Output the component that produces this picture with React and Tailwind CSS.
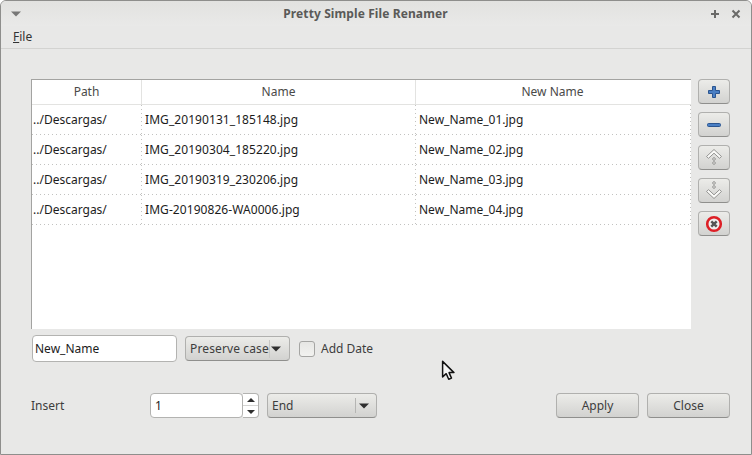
const rows = [
  ["../Descargas/", "IMG_20190131_185148.jpg", "New_Name_01.jpg"],
  ["../Descargas/", "IMG_20190304_185220.jpg", "New_Name_02.jpg"],
  ["../Descargas/", "IMG_20190319_230206.jpg", "New_Name_03.jpg"],
  ["../Descargas/", "IMG-20190826-WA0006.jpg", "New_Name_04.jpg"],
];

const btn =
  "rounded-[4px] border border-[#b0b0ae] border-b-[#8f8f8d] bg-gradient-to-b from-[#ecece9] to-[#d2d2d0] text-[#3d3d3d]";

const Caret = ({ className = "", w = 10 }) => (
  <svg width={w} height="6" viewBox="0 0 10 6" className={className}>
    <path d="M0 0.5h10L5 5.5z" fill="#2f2f2f" />
  </svg>
);

const SideButton = ({ children, mb = "mb-[8px]" }) => (
  <div className={`${btn} ${mb} flex h-[25px] w-[32px] items-center justify-center`}>{children}</div>
);

const VDots = () => (
  <div className="w-px shrink-0 bg-[repeating-linear-gradient(180deg,#c2c2c0_0,#c2c2c0_1px,transparent_1px,transparent_4px)]" />
);

export default function App() {
  return (
    <div className="relative flex h-[455px] w-[752px] flex-col overflow-hidden rounded-t-[6px] border border-[#8e8e8c] bg-[#e8e8e7] font-['Noto_Sans',sans-serif] text-[12px] text-[#3d3d3d]">
      {/* title bar */}
      <div className="flex h-[25px] shrink-0 items-center bg-gradient-to-b from-[#e2e2e0] to-[#e9e9e8] px-[10px]">
        <Caret className="opacity-60" />
        <div className="flex-1 text-center text-[12px] font-bold tracking-[0.1px] text-[#5a5a58]">Pretty Simple File Renamer</div>
        <svg width="10" height="10" viewBox="0 0 10 10" className="mr-[11px]">
          <path d="M5 1v8M1 5h8" stroke="#6a6a68" strokeWidth="2" />
        </svg>
        <svg width="10" height="10" viewBox="0 0 10 10">
          <path d="M1.5 1.5l7 7M8.5 1.5l-7 7" stroke="#6a6a68" strokeWidth="2" />
        </svg>
      </div>

      {/* menu */}
      <div className="flex h-[23px] shrink-0 items-center border-b border-[#d3d3d1] pl-[12px]">
        <span className="text-[12px] text-[#333]"><span className="underline">F</span>ile</span>
      </div>

      <div className="flex flex-1 flex-col pl-[30px] pr-[21px] pt-[30px]">
        <div className="flex">
          {/* table */}
          <div className="h-[250px] w-[660px] border-l border-t border-[#a3a3a1] bg-white">
            <div className="flex h-[25px] border-b border-[#e3e3e1] text-[#4a4a48]">
              <div className="flex w-[110px] items-center justify-center border-r border-[#e3e3e1]">Path</div>
              <div className="flex w-[274px] items-center justify-center border-r border-[#e3e3e1]">Name</div>
              <div className="flex flex-1 items-center justify-center pr-[2px]">New Name</div>
            </div>
            {rows.map((r) => (
              <div key={r[1]} className="flex h-[30px] flex-col text-[#1c1c1c]">
                <div className="flex h-[29px]">
                  <div className="flex w-[109px] items-center pl-px">{r[0]}</div>
                  <VDots />
                  <div className="flex w-[273px] items-center pl-[3px] tracking-[0.07px]">{r[1]}</div>
                  <VDots />
                  <div className="flex flex-1 items-center pl-[3px]">{r[2]}</div>
                  <VDots />
                </div>
                <div className="h-px bg-[repeating-linear-gradient(90deg,#c2c2c0_0,#c2c2c0_1px,transparent_1px,transparent_4px)]" />
              </div>
            ))}
          </div>

          {/* side buttons */}
          <div className="ml-[7px] flex flex-col">
            <SideButton>
              <svg width="16" height="16" viewBox="0 0 16 16">
                <path d="M6.5 2.5h3v4h4v3h-4v4h-3v-4h-4v-3h4z" fill="#4a7fc4" stroke="#2b5590" strokeWidth="1" strokeLinejoin="round" />
              </svg>
            </SideButton>
            <SideButton>
              <svg width="16" height="16" viewBox="0 0 16 16">
                <rect x="1.5" y="6.5" width="13" height="3" rx="1" fill="#4a7fc4" stroke="#2b5590" />
              </svg>
            </SideButton>
            <SideButton>
              <svg width="20" height="20" viewBox="0 0 20 20">
                <path d="M2.5 8.5L10 1.5l7.5 7-2 1.8L10 5.2 4.5 10.3z" fill="#fafaf8" stroke="#939391" strokeLinejoin="round" />
                <circle cx="10" cy="11" r="1.3" fill="#f4f4f2" stroke="#939391" />
                <circle cx="10" cy="15" r="1.3" fill="#f4f4f2" stroke="#939391" />
              </svg>
            </SideButton>
            <SideButton>
              <svg width="20" height="20" viewBox="0 0 20 20">
                <circle cx="10" cy="2" r="1.3" fill="#f4f4f2" stroke="#939391" />
                <circle cx="10" cy="6" r="1.3" fill="#f4f4f2" stroke="#939391" />
                <path d="M2.5 10.5L10 17.5l7.5-7-2-1.8L10 13.8 4.5 8.7z" fill="#fafaf8" stroke="#939391" strokeLinejoin="round" />
              </svg>
            </SideButton>
            <SideButton mb="">
              <svg width="18" height="18" viewBox="0 0 18 18">
                <circle cx="9" cy="9" r="6.8" fill="#eee" stroke="#dd1f26" strokeWidth="2.6" />
                <path d="M6.3 6.3l5.4 5.4M11.7 6.3l-5.4 5.4" stroke="#555" strokeWidth="2.4" />
              </svg>
            </SideButton>
          </div>
        </div>

        {/* name row */}
        <div className="mt-[6px] flex items-center pl-px">
          <div className="flex h-[27px] w-[145px] items-center rounded-[4px] border border-[#b3b3b1] bg-white pl-[2px] text-[#1c1c1c]">New_Name</div>
          <div className={`${btn} ml-[8px] flex h-[25px] w-[105px] items-center pl-[4px]`}>
            <span className="border-r border-[#c8c8c6] tracking-[0.13px]">Preserve case</span>
            <Caret className="ml-px" />
          </div>
          <div className="ml-[9px] h-[16px] w-[16px] rounded-[3px] border border-[#a5a5a3] bg-gradient-to-b from-[#e6e6e4] to-[#f2f2f0]" />
          <span className="ml-[6px]">Add Date</span>
        </div>

        {/* insert row */}
        <div className="mt-[31px] flex items-center">
          <span className="w-[119px]">Insert</span>
          <div className="flex h-[25px] w-[93px] items-center rounded-[4px] border border-[#b3b3b1] bg-white pl-[4px] text-[#1c1c1c]">1</div>
          <div className="flex h-[25px] w-[16px] flex-col items-center rounded-r-[4px] border border-l-0 border-[#b3b3b1] bg-white">
            <div className="flex w-full flex-1 items-center justify-center border-b border-[#d5d5d3]">
              <Caret w={8} className="rotate-180" />
            </div>
            <div className="flex w-full flex-1 items-center justify-center">
              <Caret w={8} />
            </div>
          </div>
          <div className={`${btn} ml-[8px] flex h-[25px] w-[110px] items-center pl-[4px]`}>
            <span className="flex-1">End</span>
            <div className="mr-[5px] flex h-[15px] w-[16px] items-center justify-center border-l border-[#b5b5b3]">
              <Caret />
            </div>
          </div>
          <div className={`${btn} ml-auto flex h-[25px] w-[83px] items-center justify-center`}>Apply</div>
          <div className={`${btn} ml-[8px] flex h-[25px] w-[83px] items-center justify-center`}>Close</div>
        </div>
      </div>

      {/* mouse pointer */}
      <svg width="15" height="22" viewBox="0 0 14 20" className="absolute left-[440px] top-[359px]">
        <path d="M1.5 1v14.5l3.4-3 2.3 5.2 2.6-1.1-2.3-5.1h4.6z" fill="#f4f4f4" stroke="#111" strokeWidth="1.4" strokeLinejoin="round" />
      </svg>
    </div>
  );
}
